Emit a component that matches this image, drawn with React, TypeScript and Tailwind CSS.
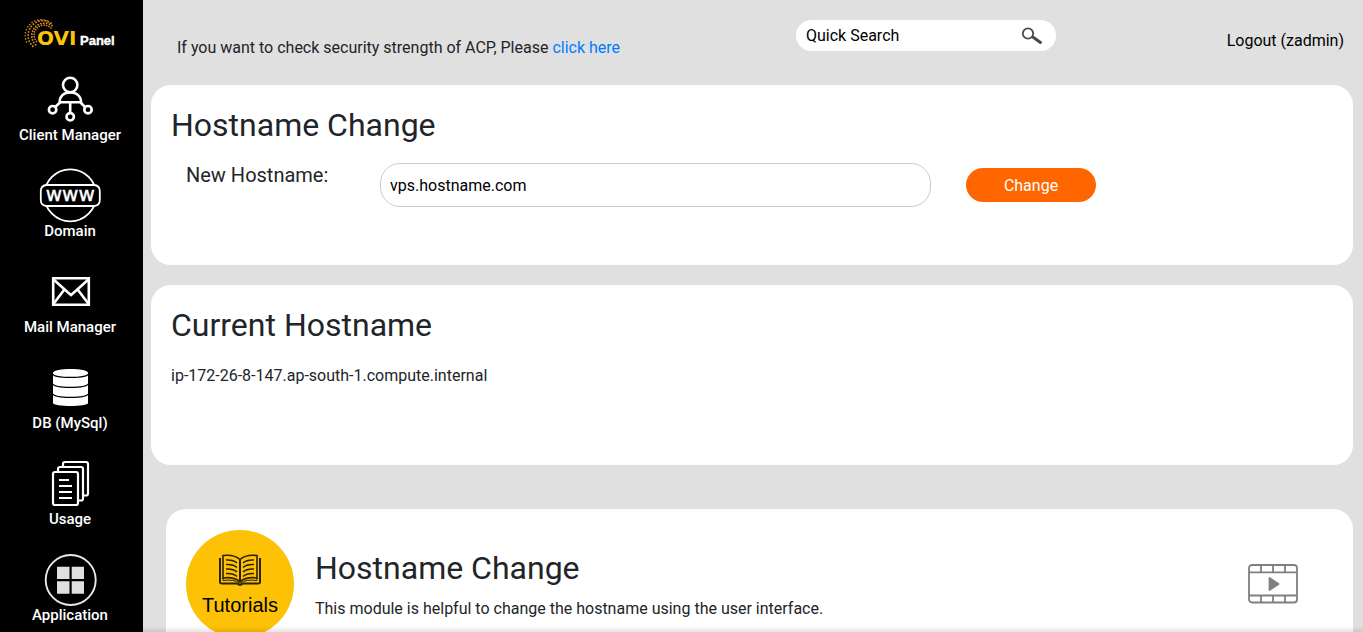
import type { ReactNode } from "react";

const menu: { label: string; icon: ReactNode }[] = [
  {
    label: "Client Manager",
    icon: (
      <g fill="none" stroke="#fff" strokeWidth="2.6">
        <circle cx="32.2" cy="19" r="7.2" />
        <path d="M21.7 36.3C21.7 30 26 26.5 32.2 26.5S43 30 43 36.3Z" />
        <path d="M22 36.5L17.2 41M42.5 36.5L47 41M32.2 36.5V47" />
        <circle cx="14.6" cy="43.7" r="3.7" />
        <circle cx="50" cy="43.7" r="3.7" />
        <circle cx="32.2" cy="50.8" r="3.7" />
      </g>
    ),
  },
  {
    label: "Domain",
    icon: (
      <>
        <circle cx="32.3" cy="33.3" r="26" fill="none" stroke="#fff" strokeWidth="1.8" />
        <path
          d="M8 23H56.6Q61.8 24 61.8 29V38Q61.8 43 56.6 44H8Q2.8 43 2.8 38V29Q2.8 24 8 23Z"
          fill="#000"
          stroke="#fff"
          strokeWidth="1.8"
        />
        <text
          x="32.3"
          y="38.5"
          fill="#fff"
          stroke="#fff"
          strokeWidth=".4"
          fontSize="20"
          textAnchor="middle"
          fontFamily="'DejaVu Sans', sans-serif"
        >
          www
        </text>
      </>
    ),
  },
  {
    label: "Mail Manager",
    icon: (
      <g fill="none" stroke="#fff" strokeWidth="2.6">
        <path d="M15.2 20.2H50.8V46.8H15.2Z" />
        <path d="M15 21L29.5 34L33 37L36.5 34L51 21M15 46.5L26 32M51 46.5L40 32" />
      </g>
    ),
  },
  {
    label: "DB (MySql)",
    icon: (
      <>
        <path
          d="M15 19C15 13.8 50 13.8 50 19V49C50 53 15 53 15 49Z"
          fill="#fff"
        />
        <path
          d="M15 20C15 24.5 50 24.5 50 20M15 30C17 34.5 48 34.5 50 30M15 40C17 44.5 48 44.5 50 40"
          fill="none"
          stroke="#000"
          strokeWidth="1.2"
        />
      </>
    ),
  },
  {
    label: "Usage",
    icon: (
      <g fill="#000" stroke="#fff" strokeWidth="2.2">
        <rect x="25" y="12" width="25" height="33.5" rx="2" />
        <rect x="20" y="17" width="25" height="33.5" rx="2" />
        <rect x="15" y="22" width="25" height="33" rx="2" />
        <path d="M21 30H31M21 36H34M21 42H34M21 48H34" />
      </g>
    ),
  },
  {
    label: "Application",
    icon: (
      <>
        <circle cx="32.7" cy="34" r="25" fill="none" stroke="#e8e8e8" strokeWidth="1.9" />
        <path
          d="M19 20.7H31.5V33H19ZM33.7 20.7H46V33H33.7ZM19 35.3H31.5V47.7H19ZM33.7 35.3H46V47.7H33.7Z"
          fill="#e0e0e0"
        />
      </>
    ),
  },
];

function Logo() {
  return (
    <svg className="h-8 w-24" viewBox="0 0 96 32" role="img" aria-label="OVI Panel">
      {/* dotted swirl behind the O */}
      <g fill="none" stroke="#e0921c" strokeLinecap="round">
        <path d="M27 9A9.5 9.5 0 0 0 13 23" strokeWidth="1.6" strokeDasharray=".1 2.4" />
        <path d="M28 6.5A12 12 0 0 0 13 27" strokeWidth="1.8" strokeDasharray=".1 2.8" />
        <path d="M27 4A14 14 0 0 0 11 29" strokeWidth="1.8" strokeDasharray=".1 3" />
        <path d="M23 1.8A16 16 0 0 0 3.5 25" strokeWidth="1.5" strokeDasharray=".1 3" />
      </g>
      <text
        x="13"
        y="26"
        fill="#fdc30a"
        fontSize="20"
        fontWeight="bold"
        fontFamily="'DejaVu Sans', sans-serif"
      >
        OVI
      </text>
      <text
        x="56"
        y="26"
        fill="#fff"
        stroke="#fff"
        strokeWidth=".4"
        fontSize="13"
        fontWeight="bold"
        fontFamily="'Liberation Sans', sans-serif"
      >
        Panel
      </text>
    </svg>
  );
}

function Sidebar() {
  return (
    <nav className="flex w-[143px] shrink-0 flex-col overflow-hidden bg-black pr-[3px]">
      <a href="#" className="flex h-[51px] shrink-0 items-end justify-center pl-1">
        <Logo />
      </a>
      {menu.map((item) => (
        <a
          key={item.label}
          href="#"
          className="flex h-24 shrink-0 flex-col items-center justify-end text-white"
        >
          <svg className="-mb-[7px] h-16 w-16 shrink-0" viewBox="0 0 64 64" aria-hidden="true">
            {item.icon}
          </svg>
          <span className="text-[15px] leading-6 font-medium">{item.label}</span>
        </a>
      ))}
    </nav>
  );
}

function Header() {
  return (
    <header className="flex h-[85px] items-start pr-[9px] pl-[26px]">
      <p className="flex-1 pt-9">
        If you want to check security strength of ACP, Please{" "}
        <a href="#" className="text-[#007bff]">
          click here
        </a>
      </p>
      <div className="mt-5 flex h-[31px] w-[260px] items-center rounded-full bg-white pr-3 pl-2.5">
        <input
          type="text"
          aria-label="Quick Search"
          placeholder="Quick Search"
          className="min-w-0 flex-1 text-black outline-none placeholder:text-black"
        />
        <button type="button" aria-label="Search">
          <svg className="h-5 w-6" viewBox="0 0 24 20" fill="none" stroke="#4a4a4a">
            <circle cx="8" cy="7.5" r="5.2" strokeWidth="1.8" />
            <path d="M12 10.5L14 12" strokeWidth="1.8" />
            <path d="M13.5 11.5L20.5 16.5" strokeWidth="3" strokeLinecap="round" />
          </svg>
        </button>
      </div>
      <a href="#" className="w-[288px] pt-[29px] text-right text-black">
        Logout (zadmin)
      </a>
    </header>
  );
}

function BookIcon() {
  return (
    <svg className="h-8 w-[42px]" viewBox="0 0 42 32" fill="none" stroke="#2b2105">
      <path d="M1 4V28Q1 29.5 3 29.5H18L21 31L24 29.5H39Q41 29.5 41 28V4" strokeWidth="2" />
      <path d="M4 1.5Q15 0 21 5.5Q27 0 38 1.5V24Q28 22.5 21 27.5Q14 22.5 4 24Z" strokeWidth="1.6" />
      <path d="M4 24V26.5Q14 25 21 29Q28 25 38 26.5V24" strokeWidth="1" />
      <path d="M21 5.5V28" strokeWidth="2" />
      <path
        d="M7 6Q14 5.5 18 9M7 10.5Q14 10 18 13.5M7 15Q14 14.5 18 18M7 19.5Q14 19 18 22.5M35 6Q28 5.5 24 9M35 10.5Q28 10 24 13.5M35 15Q28 14.5 24 18M35 19.5Q28 19 24 22.5"
        strokeWidth="1.5"
      />
    </svg>
  );
}

function FilmIcon() {
  return (
    <svg className="h-10 w-[50px]" viewBox="0 0 50 40" fill="none" stroke="#808080" strokeWidth="1.8">
      <rect x="1" y="1" width="48" height="37.5" rx="3" />
      <path d="M1 8.3H49M1 31.5H49M13 1V8M25 1V8M37 1V8M13 32V38M25 32V38M37 32V38" />
      <path d="M21.5 14L30.5 20L21.5 26Z" fill="#808080" strokeLinejoin="round" />
    </svg>
  );
}

export default function App() {
  return (
    <div className="relative flex h-screen overflow-hidden bg-[#e0e0e0] font-['Roboto',sans-serif] text-base text-[#212529]">
      <Sidebar />
      <main className="min-w-0 flex-1 overflow-hidden pr-2.5 pl-2">
        <Header />

        <section className="min-h-[180px] rounded-[20px] bg-white px-5 pt-5">
          <h2 className="text-[32px] leading-10">Hostname Change</h2>
          <form className="flex items-start pt-[18px] pl-[15px]">
            <label htmlFor="hostname" className="w-[194px] shrink-0 text-xl leading-6">
              New Hostname:
            </label>
            <input
              id="hostname"
              type="text"
              defaultValue="vps.hostname.com"
              className="h-11 w-[551px] min-w-0 rounded-[20px] border border-[#ccc] px-[9px] text-black outline-none"
            />
            <button
              type="button"
              className="mt-[5px] ml-[35px] h-[34px] w-[130px] shrink-0 rounded-full bg-[#ff6600] pt-0.5 text-white"
            >
              Change
            </button>
          </form>
        </section>

        <section className="mt-5 min-h-[180px] rounded-[20px] bg-white px-5 pt-5">
          <h2 className="text-[32px] leading-10">Current Hostname</h2>
          <p className="pt-[19px]">ip-172-26-8-147.ap-south-1.compute.internal</p>
        </section>

        <section className="mt-11 ml-[15px] flex items-start rounded-[20px] bg-white px-5 py-[21px]">
          <div className="flex h-[108px] w-[108px] shrink-0 flex-col items-center rounded-full bg-[#fdc206] pt-6">
            <BookIcon />
            <span className="pt-[7px] font-['Liberation_Sans',sans-serif] text-xl leading-6 text-black">
              Tutorials
            </span>
          </div>
          <div className="flex-1 pt-[18px] pl-[21px]">
            <h2 className="text-[32px] leading-10">Hostname Change</h2>
            <p className="pt-[9px]">
              This module is helpful to change the hostname using the user interface.
            </p>
          </div>
          <button type="button" aria-label="Watch tutorial video" className="mt-[34px] mr-[35px]">
            <FilmIcon />
          </button>
        </section>
      </main>
      <div className="pointer-events-none absolute inset-x-0 bottom-0 h-1.5 bg-linear-to-t from-black/10 to-transparent" />
    </div>
  );
}
